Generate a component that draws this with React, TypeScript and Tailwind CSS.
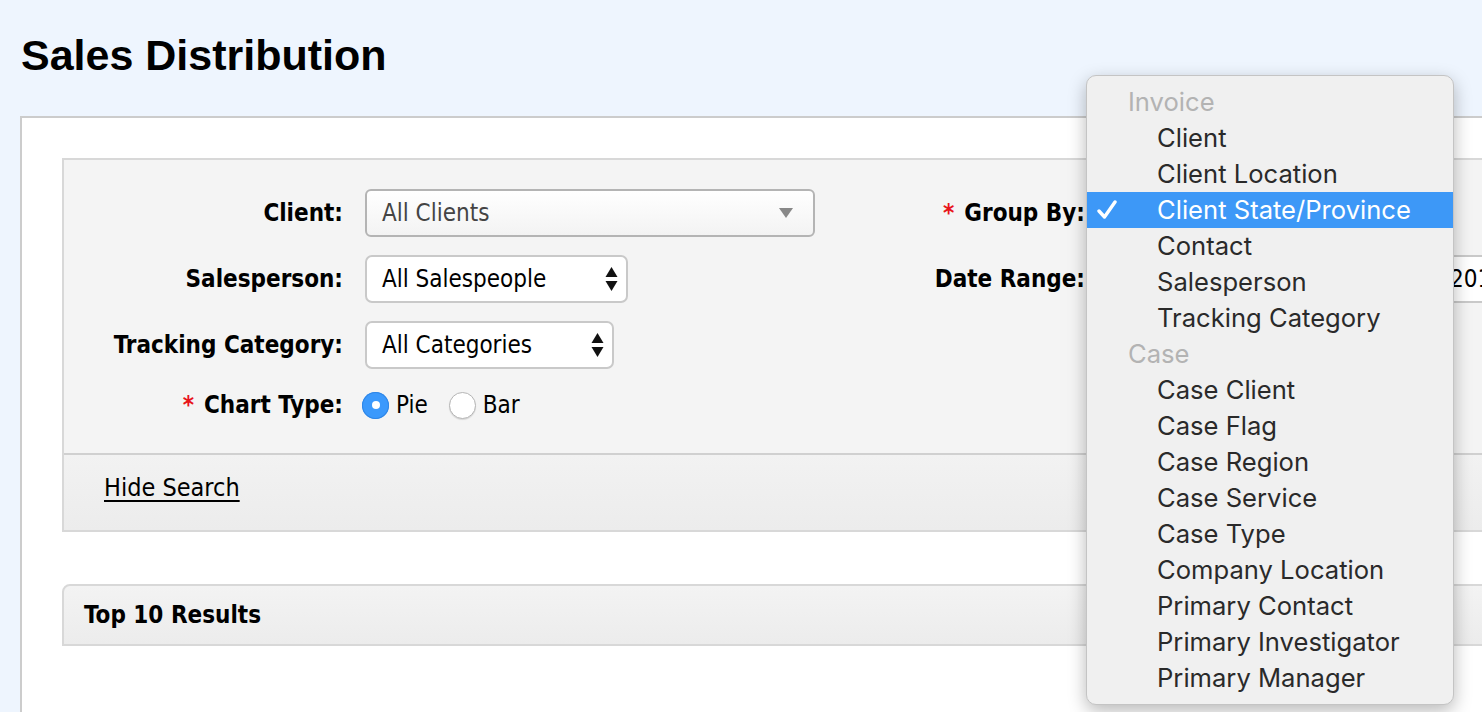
import React from "react";

const label = "font-['DejaVu_Sans_Condensed','DejaVu_Sans',sans-serif] font-bold text-[24px] text-black";
const field = "font-['DejaVu_Sans_Condensed','DejaVu_Sans',sans-serif] text-[24px]";

const menuRows: { text: string; header?: boolean; selected?: boolean }[] = [
  { text: "Invoice", header: true },
  { text: "Client" },
  { text: "Client Location" },
  { text: "Client State/Province", selected: true },
  { text: "Contact" },
  { text: "Salesperson" },
  { text: "Tracking Category" },
  { text: "Case", header: true },
  { text: "Case Client" },
  { text: "Case Flag" },
  { text: "Case Region" },
  { text: "Case Service" },
  { text: "Case Type" },
  { text: "Company Location" },
  { text: "Primary Contact" },
  { text: "Primary Investigator" },
  { text: "Primary Manager" },
];

function Spinner() {
  return (
    <svg width="13" height="26" viewBox="0 0 13 26" className="shrink-0">
      <path d="M6.5 1 L12.5 11 L0.5 11 Z" fill="#111" />
      <path d="M6.5 25 L12.5 15 L0.5 15 Z" fill="#111" />
    </svg>
  );
}

function NativeSelect({ value, width }: { value: string; width: string }) {
  return (
    <div
      className={`${width} flex h-[48px] items-center justify-between rounded-[7px] border-2 border-[#c9c9c9] bg-white pl-[15px] pr-[8px] ${field} text-black`}
    >
      <span>{value}</span>
      <Spinner />
    </div>
  );
}

function Row({ name, required, children }: { name: string; required?: boolean; children: React.ReactNode }) {
  return (
    <div className="flex h-[48px] items-center">
      <div className={`w-[279px] shrink-0 text-right ${label}`}>
        {required ? <span className="mr-[10px] text-[#e8141b]">*</span> : null}
        {name}
      </div>
      <div className="ml-[22px] flex items-center">{children}</div>
    </div>
  );
}

function Radio({ checked, text }: { checked?: boolean; text: string }) {
  return (
    <div className="flex items-center">
      {checked ? (
        <span className="flex h-[27px] w-[27px] items-center justify-center rounded-full bg-[#3b99fc] shadow-[inset_0_0_0_1px_#2f86e6]">
          <span className="h-[8px] w-[8px] rounded-full bg-white" />
        </span>
      ) : (
        <span className="h-[27px] w-[27px] rounded-full border border-[#b5b5b5] bg-white shadow-[0_1px_1px_rgba(0,0,0,0.12)]" />
      )}
      <span className={`ml-[7px] ${field} text-black`}>{text}</span>
    </div>
  );
}

export default function App() {
  return (
    <div className="relative h-[712px] w-full overflow-hidden bg-[#eef5fe]">
      <h1 className="pl-[21px] pt-[31px] font-['Liberation_Sans',Arial,sans-serif] text-[43px] font-bold leading-[48px] text-black">
        Sales Distribution
      </h1>

      <div className="ml-[20px] mt-[37px] w-[1600px] border-l-2 border-t-2 border-[#cccccc] bg-white pl-[40px] pt-[40px] pb-[80px]">
        <div className="border-2 border-[#d8d8d8] bg-[#f4f4f4]">
          <div className="flex pt-[29px] pb-[30px]">
            <div className="flex w-[780px] shrink-0 flex-col gap-[18px]">
              <Row name="Client:">
                <div
                  className={`flex h-[48px] w-[450px] items-center justify-between rounded-[6px] border-2 border-[#b4b4b4] bg-gradient-to-b from-white to-[#f3f3f3] pl-[15px] pr-[20px] ${field} text-[#444]`}
                >
                  <span>All Clients</span>
                  <svg width="14" height="10" viewBox="0 0 14 10">
                    <path d="M0 0 L14 0 L7 10 Z" fill="#888" />
                  </svg>
                </div>
              </Row>
              <Row name="Salesperson:">
                <NativeSelect value="All Salespeople" width="w-[263px]" />
              </Row>
              <Row name="Tracking Category:">
                <NativeSelect value="All Categories" width="w-[249px]" />
              </Row>
              <div className="flex h-[36px] items-center">
                <div className={`w-[279px] shrink-0 text-right ${label}`}>
                  <span className="mr-[10px] text-[#e8141b]">*</span>
                  Chart Type:
                </div>
                <div className="ml-[19px] flex items-center gap-[21px]">
                  <Radio checked text="Pie" />
                  <Radio text="Bar" />
                </div>
              </div>
            </div>

            <div className="flex shrink-0 flex-col gap-[18px]">
              <div className="flex h-[48px] items-center">
                <div className={`w-[241px] shrink-0 text-right ${label}`}>
                  <span className="mr-[10px] text-[#e8141b]">*</span>
                  Group By:
                </div>
                <div className="ml-[18px]">
                  <NativeSelect value="Client State/Province" width="w-[300px]" />
                </div>
              </div>
              <div className="flex h-[48px] items-center">
                <div className={`w-[241px] shrink-0 text-right ${label}`}>Date Range:</div>
                <div className="ml-[18px] flex gap-[8px]">
                  <NativeSelect value="Custom" width="w-[330px]" />
                  <div className={`flex h-[48px] w-[220px] items-center border-y-2 border-l-2 border-[#c9c9c9] bg-white pl-[7px] ${field} text-black`}>
                    2017-01-01
                  </div>
                </div>
              </div>
            </div>
          </div>

          <div className="flex h-[77px] items-center border-t-2 border-[#d0d0d0] bg-gradient-to-b from-[#f2f2f2] to-[#ececec] pb-[9px] pl-[40px]">
            <a href="#" className={`${field} text-[25px] text-black underline decoration-[2px] underline-offset-[4px]`}>
              Hide Search
            </a>
          </div>
        </div>

        <div className="mt-[52px] flex h-[62px] items-center rounded-tl-[8px] border-2 border-[#d8d8d8] bg-gradient-to-b from-[#f3f3f3] to-[#ececec] pl-[20px]">
          <span className={label}>Top 10 Results</span>
        </div>
      </div>

      <div className="absolute left-[1086px] top-[75px] w-[368px] rounded-[10px] border border-[#c4c4c4] bg-[#f0f0f0] py-[8px] shadow-[0_6px_18px_rgba(0,0,0,0.28)]">
        {menuRows.map((row) => (
          <div
            key={row.text}
            className={`relative flex h-[36px] items-center font-['Inter','Noto_Sans',sans-serif] text-[25.6px] ${
              row.header ? "pl-[41px] text-[#b3b3b3]" : "pl-[70px]"
            } ${row.selected ? "bg-[#3d98f7] text-white" : row.header ? "" : "text-[#2a2a2a]"}`}
          >
            {row.selected ? (
              <svg width="20" height="20" viewBox="0 0 20 20" className="absolute left-[10px] top-[8px]">
                <path d="M2 11 L7.5 17 L18 2" fill="none" stroke="#fff" strokeWidth="3.4" strokeLinecap="round" strokeLinejoin="round" />
              </svg>
            ) : null}
            {row.text}
          </div>
        ))}
      </div>
    </div>
  );
}
